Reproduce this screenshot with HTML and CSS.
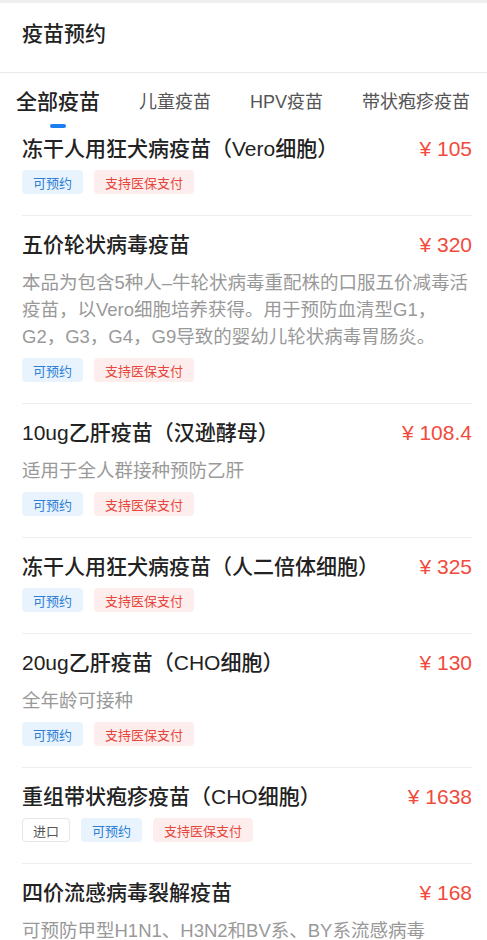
FILE: index.html
```html
<!DOCTYPE html>
<html lang="zh-CN">
<head>
<meta charset="utf-8">
<title>疫苗预约</title>
<link rel="stylesheet" href="styles.css">
</head>
<body>
<div class="page">
  <header class="header">
    <h1 class="header-title">疫苗预约</h1>
  </header>
  <nav class="tabs">
    <div class="tab tab-active"><span class="tab-text">全部疫苗</span><span class="tab-bar"></span></div>
    <div class="tab"><span class="tab-text">儿童疫苗</span></div>
    <div class="tab"><span class="tab-text">HPV疫苗</span></div>
    <div class="tab"><span class="tab-text">带状疱疹疫苗</span></div>
  </nav>
  <ul class="list">
    <li class="item item-first">
      <div class="item-head"><span class="item-title">冻干人用狂犬病疫苗（Vero细胞）</span><span class="price">¥ 105</span></div>
      <div class="tags"><span class="tag tag-blue">可预约</span><span class="tag tag-red">支持医保支付</span></div>
    </li>
    <li class="item">
      <div class="item-head"><span class="item-title">五价轮状病毒疫苗</span><span class="price">¥ 320</span></div>
      <p class="desc">本品为包含5种人–牛轮状病毒重配株的口服五价减毒活疫苗，以Vero细胞培养获得。用于预防血清型G1，G2，G3，G4，G9导致的婴幼儿轮状病毒胃肠炎。</p>
      <div class="tags"><span class="tag tag-blue">可预约</span><span class="tag tag-red">支持医保支付</span></div>
    </li>
    <li class="item">
      <div class="item-head"><span class="item-title">10ug乙肝疫苗（汉逊酵母）</span><span class="price">¥ 108.4</span></div>
      <p class="desc">适用于全人群接种预防乙肝</p>
      <div class="tags"><span class="tag tag-blue">可预约</span><span class="tag tag-red">支持医保支付</span></div>
    </li>
    <li class="item">
      <div class="item-head"><span class="item-title">冻干人用狂犬病疫苗（人二倍体细胞）</span><span class="price">¥ 325</span></div>
      <div class="tags"><span class="tag tag-blue">可预约</span><span class="tag tag-red">支持医保支付</span></div>
    </li>
    <li class="item">
      <div class="item-head"><span class="item-title">20ug乙肝疫苗（CHO细胞）</span><span class="price">¥ 130</span></div>
      <p class="desc">全年龄可接种</p>
      <div class="tags"><span class="tag tag-blue">可预约</span><span class="tag tag-red">支持医保支付</span></div>
    </li>
    <li class="item">
      <div class="item-head"><span class="item-title">重组带状疱疹疫苗（CHO细胞）</span><span class="price">¥ 1638</span></div>
      <div class="tags"><span class="tag tag-plain">进口</span><span class="tag tag-blue">可预约</span><span class="tag tag-red">支持医保支付</span></div>
    </li>
    <li class="item item-last">
      <div class="item-head"><span class="item-title">四价流感病毒裂解疫苗</span><span class="price">¥ 168</span></div>
      <p class="desc">可预防甲型H1N1、H3N2和BV系、BY系流感病毒</p>
    </li>
  </ul>
</div>
</body>
</html>
```
FILE: styles.css
```css
* { box-sizing: border-box; }
html, body { margin: 0; padding: 0; background: #fff; }
body {
  font-family: "Liberation Sans", "Noto Sans CJK SC", sans-serif;
  color: #222;
}
.page { width: 487px; }
.header {
  border-top: 3px solid #efefef;
  border-bottom: 1px solid #e9e9e9;
  padding: 18px 22px 25px;
}
.header-title {
  margin: 0;
  font-size: 21px;
  line-height: 26px;
  font-weight: 500;
  color: #222;
}
.tabs {
  display: flex;
  gap: 39px;
  padding: 16px 0 1px 16px;
  height: 56px;
  white-space: nowrap;
}
.tab {
  display: flex;
  flex-direction: column;
  align-items: center;
}
.tab-text {
  font-size: 18px;
  line-height: 26px;
  color: #555;
}
.tab-active .tab-text {
  font-size: 21px;
  font-weight: 500;
  color: #222;
}
.tab-bar {
  margin-top: 9px;
  width: 16px;
  height: 4px;
  border-radius: 2px;
  background: #1a7ff0;
}
.list {
  list-style: none;
  margin: 0;
  padding: 0 15px 0 22px;
}
.item {
  padding: 16px 0 21px;
  border-bottom: 1px solid #eeeeee;
}
.item-first { padding-top: 7px; }
.item-last { padding-bottom: 0; border-bottom: none; }
.item-head {
  display: flex;
  justify-content: space-between;
  align-items: center;
  height: 26px;
}
.item-title {
  font-size: 21px;
  line-height: 26px;
  font-weight: 500;
  color: #222;
  white-space: nowrap;
}
.price {
  font-size: 21px;
  line-height: 26px;
  color: #f24a3d;
  white-space: nowrap;
}
.desc {
  margin: 11px 0 0;
  font-size: 18.5px;
  line-height: 27px;
  color: #999;
  line-break: strict;
}
.tags {
  display: flex;
  gap: 11px;
  margin-top: 8px;
}
.tag {
  display: inline-flex;
  align-items: center;
  height: 24px;
  padding: 0 11px;
  border-radius: 4px;
  font-size: 13px;
}
.tag-blue { background: #e8f3fe; color: #2d7ed6; }
.tag-red { background: #fdeeed; color: #e6463c; }
.tag-plain { background: #fff; color: #555; border: 1px solid #e6e6e6; padding: 0 10px; }
```
